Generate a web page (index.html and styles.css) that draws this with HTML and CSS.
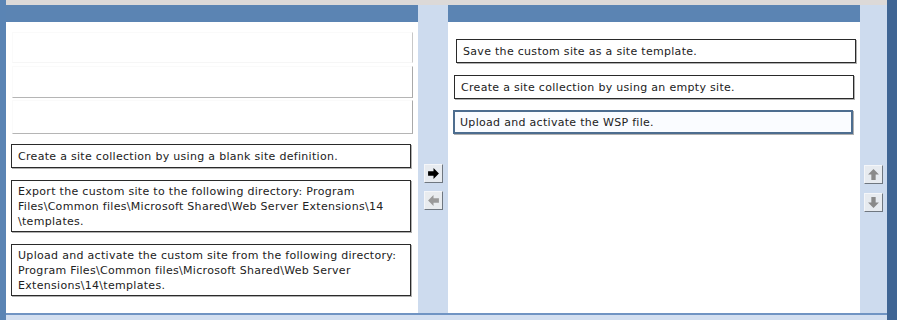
FILE: index.html
```html
<!DOCTYPE html>
<html>
<head>
    <title>Build List</title>
    <link rel="stylesheet" href="styles.css">
</head>
<body>
    <div class="window">
        <div class="edge-left"></div>
        <div class="main">
            <div class="top-strip"></div>
            <div class="cols">
                <div class="panel">
                    <div class="panel-head"></div>
                    <div class="panel-body left-body">
                        <div class="slot slot-1"></div>
                        <div class="slot slot-2"></div>
                        <div class="slot slot-3"></div>
                        <div class="item item-a">Create a site collection by using a blank site definition.</div>
                        <div class="item item-b">Export the custom site to the following directory: Program Files\Common files\Microsoft Shared\Web Server Extensions\14 \templates.</div>
                        <div class="item item-c">Upload and activate the custom site from the following directory: Program Files\Common files\Microsoft Shared\Web Server Extensions\14\templates.</div>
                    </div>
                </div>
                <div class="mid">
                    <button class="arrow-btn" title="Move right">
                        <svg width="13" height="13" viewBox="0 0 12 12"><path d="M1 4h5V1l5 5-5 5V8H1z" fill="#000"/></svg>
                    </button>
                    <button class="arrow-btn disabled" title="Move left">
                        <svg width="13" height="13" viewBox="0 0 12 12"><path d="M11 4H6V1L1 6l5 5V8h5z" fill="#9a9a9a"/></svg>
                    </button>
                </div>
                <div class="panel">
                    <div class="panel-head"></div>
                    <div class="panel-body right-body">
                        <div class="item item-r1">Save the custom site as a site template.</div>
                        <div class="item item-r2">Create a site collection by using an empty site.</div>
                        <div class="item item-r3 selected">Upload and activate the WSP file.</div>
                    </div>
                </div>
                <div class="side">
                    <button class="arrow-btn" title="Move up">
                        <svg width="13" height="13" viewBox="0 0 12 12"><path d="M4 11V6H1l5-5 5 5H8v5z" fill="#8a8a8a"/></svg>
                    </button>
                    <button class="arrow-btn" title="Move down">
                        <svg width="13" height="13" viewBox="0 0 12 12"><path d="M4 1v5H1l5 5 5-5H8V1z" fill="#8a8a8a"/></svg>
                    </button>
                </div>
            </div>
            <div class="footer"></div>
        </div>
        <div class="edge-right"></div>
    </div>
</body>
</html>
```

FILE: styles.css
```css
body {
    margin: 0;
    font-family: "DejaVu Sans", Verdana, sans-serif;
    font-size: 11px;
    color: #222;
    background: #cbd9ec;
}
.window { display: flex; width: 897px; height: 320px; overflow: hidden; }
.edge-left { width: 6px; background: #5a84b4; }
.edge-right { width: 10px; background: #3f6594; }
.main { flex: 1; display: flex; flex-direction: column; }
.top-strip { height: 5px; background: #dcd9d8; }
.cols { flex: 1; display: flex; }
.panel { width: 412px; display: flex; flex-direction: column; }
.panel-head { height: 17px; background: #5b84b3; }
.panel-body { flex: 1; background: #fff; }
.mid {
    width: 30px;
    background: #cddbee;
    display: flex;
    flex-direction: column;
    align-items: center;
    padding-top: 159px;
    gap: 8px;
}
.side {
    width: 27px;
    background: #cddbee;
    display: flex;
    flex-direction: column;
    align-items: center;
    padding-top: 160px;
    gap: 9px;
}
.footer { height: 7px; border-top: 2px solid #7094c3; background: #d3dff0; box-sizing: border-box; }

/* list boxes */
.left-body { padding: 10px 0 0 5px; }
.right-body { padding: 17px 0 0 7px; }
.slot {
    width: 401px;
    margin-left: 1px;
    box-sizing: border-box;
    border: 1px solid #fafafa;
    border-right-color: #a9a9a9;
    border-bottom-color: #b5b5b5;
}
.slot-1 { height: 31px; border-bottom-color: #f6f6f6; border-right-color: #c8c8c8; }
.slot-2 { height: 32px; margin-top: 3px; }
.slot-3 { height: 34px; margin-top: 2px; }
.item {
    width: 400px;
    box-sizing: border-box;
    border: 1px solid #2a2a2a;
    box-shadow: 1px 1px 0 #b0b0b0;
    padding: 3px 6px 2px;
    line-height: 15px;
    letter-spacing: 0.3px;
    background: #fff;
}
.item-a { margin-top: 10px; padding: 4px 6px 3px; }
.item-b { margin-top: 12px; }
.item-c { margin-top: 12px; }
.item-r1 { margin-left: 1px; padding: 4px 6px 3px; }
.item-r2 { margin-top: 12px; margin-left: -1px; padding: 4px 6px 3px; }
.item-r3 { margin-top: 11px; margin-left: -2px; }
.selected { border: 2px solid #4d6d8f; padding: 3px 5px 2px; background: #fafcff; }

.arrow-btn {
    width: 19px;
    height: 19px;
    padding: 0;
    border: 1px solid #f4f6f9;
    border-right-color: #6f7780;
    border-bottom-color: #6f7780;
    background: #e7ebf0;
    display: flex;
    align-items: center;
    justify-content: center;
}
.arrow-btn.disabled { background: #e9ecef; }
```
